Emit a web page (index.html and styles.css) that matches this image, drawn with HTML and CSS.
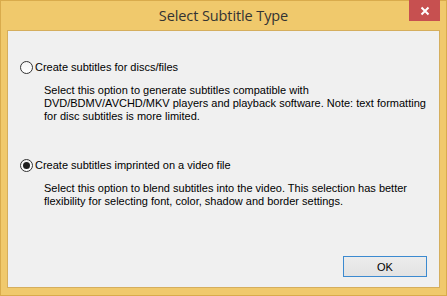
FILE: index.html
```html
<!DOCTYPE html>
<html lang="en">
<head>
    <meta charset="UTF-8">
    <title>Select Subtitle Type</title>
    <link rel="stylesheet" href="styles.css">
</head>
<body>
    <div class="window">
        <div class="title-bar">
            <span class="title">Select Subtitle Type</span>
            <span class="close-btn">
                <svg viewBox="0 0 10 10" width="10" height="10"><path d="M1.5 1.5L8.5 8.5M8.5 1.5L1.5 8.5" stroke="#fff" stroke-width="2"/></svg>
            </span>
        </div>
        <div class="client">
            <div class="options">
                <label class="option-row">
                    <span class="radio"></span>
                    <span>Create subtitles for discs/files</span>
                </label>
                <p class="desc">Select this option to generate subtitles compatible with<br>DVD/BDMV/AVCHD/MKV players and playback software. Note: text formatting<br>for disc subtitles is more limited.</p>

                <label class="option-row second">
                    <span class="radio checked"></span>
                    <span>Create subtitles imprinted on a video file</span>
                </label>
                <p class="desc">Select this option to blend subtitles into the video. This selection has better<br>flexibility for selecting font, color, shadow and border settings.</p>
            </div>
            <div class="footer">
                <button class="ok-button">OK</button>
            </div>
        </div>
    </div>
</body>
</html>
```

FILE: styles.css
```css
body, html {
    margin: 0;
    height: 100%;
    overflow: hidden;
    background: #f0c96c;
}

.window {
    width: 447px;
    height: 296px;
    box-sizing: border-box;
    background-color: #f0c96c;
    border: 1px solid #d9ab4c;
    display: flex;
    flex-direction: column;
    font-family: 'Liberation Sans', Arial, sans-serif;
}

.title-bar {
    height: 29px;
    position: relative;
    display: flex;
    justify-content: center;
    align-items: flex-start;
}

.title {
    font-family: 'Open Sans', 'Noto Sans', sans-serif;
    font-size: 14.5px;
    color: #333;
    padding-top: 5px;
    letter-spacing: -0.1px;
}

.close-btn {
    position: absolute;
    top: -1px;
    right: 6px;
    width: 31px;
    height: 21px;
    background: #c75050;
    display: flex;
    justify-content: center;
    align-items: center;
}

.client {
    flex: 1;
    margin: 0 6px 7px 6px;
    background: #f0f0f0;
    border: 1px solid #d5ae5d;
    display: flex;
    flex-direction: column;
    font-size: 11px;
    color: #000;
}

.options {
    flex: 1;
    padding: 30px 0 0 12px;
}

.option-row {
    display: flex;
    align-items: center;
    gap: 2px;
    height: 13px;
    line-height: 13px;
}

.option-row.second {
    margin-top: 36px;
}

.radio {
    width: 11px;
    height: 11px;
    border: 1px solid #333;
    border-radius: 50%;
    background: linear-gradient(#f4f4f4, #fff);
    position: relative;
}

.radio.checked::after {
    content: '';
    position: absolute;
    left: 2px;
    top: 2px;
    width: 7px;
    height: 7px;
    border-radius: 50%;
    background: #202020;
}

.desc {
    margin: 10px 0 0 24px;
    line-height: 13px;
}

.footer {
    display: flex;
    justify-content: flex-end;
    padding: 0 12px 10px 0;
}

.ok-button {
    width: 84px;
    height: 21px;
    font-family: 'Liberation Sans', Arial, sans-serif;
    font-size: 11px;
    color: #000;
    background: linear-gradient(#ececec, #e3e3e3);
    border: 1px solid #3c8ad0;
    padding: 0;
}
```
